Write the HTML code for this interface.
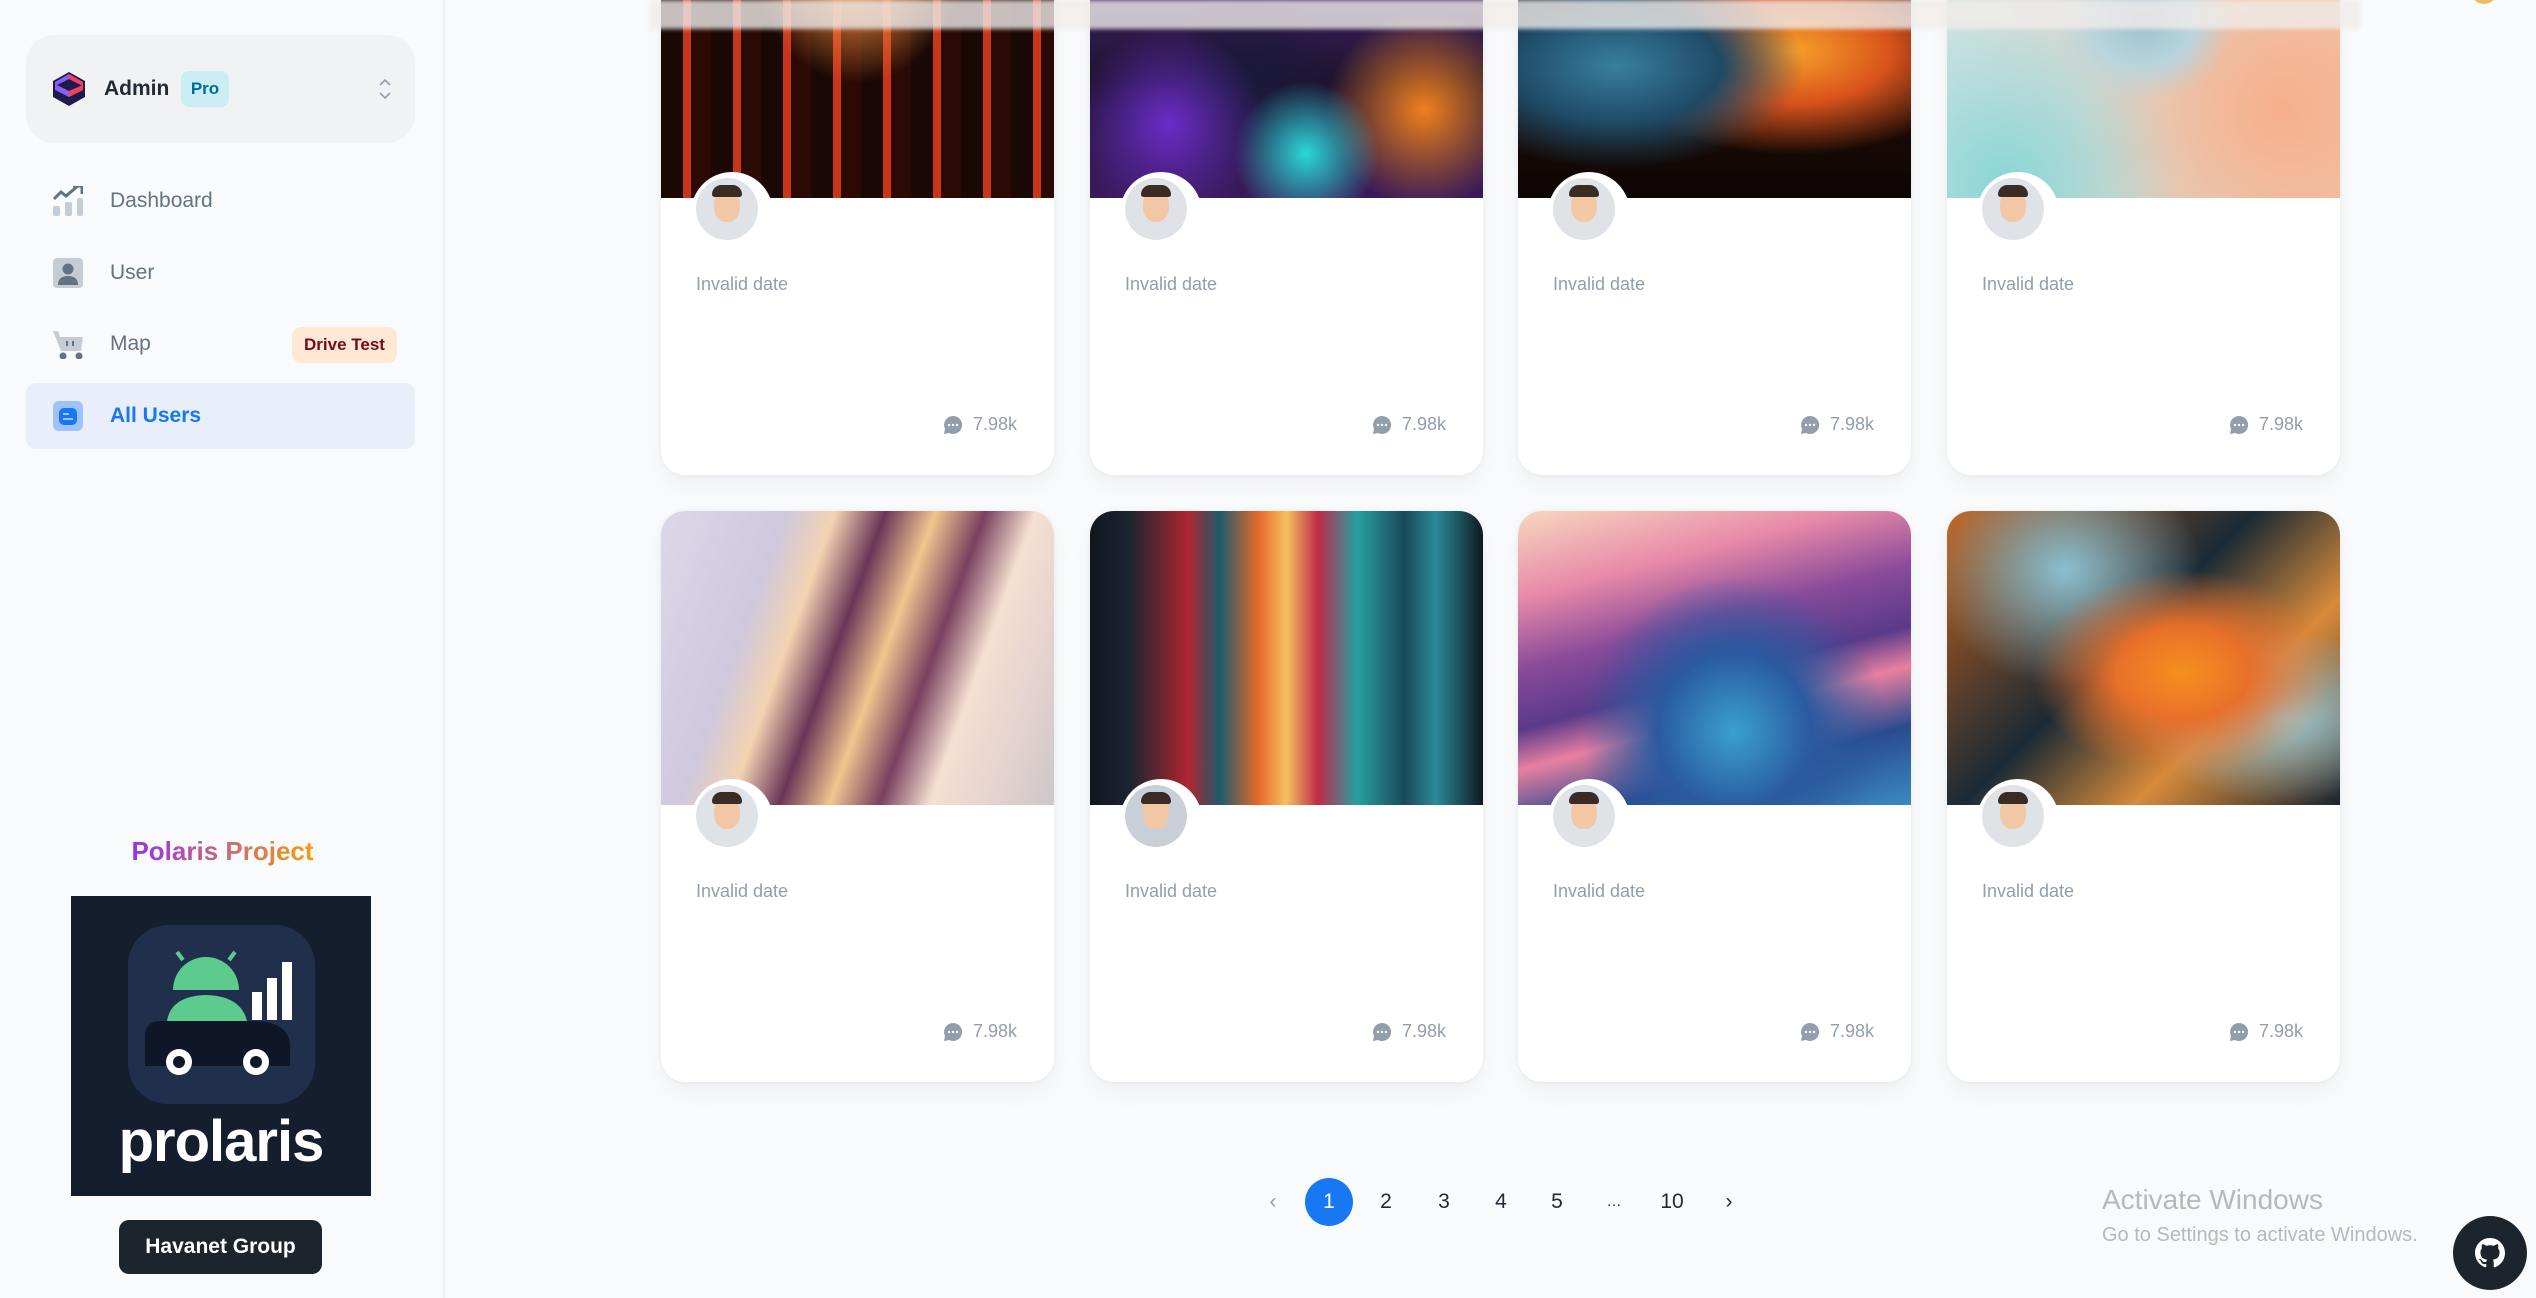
<!DOCTYPE html>
<html><head><meta charset="utf-8"><style>
*{box-sizing:border-box;margin:0;padding:0}
body{width:2536px;height:1298px;overflow:hidden;background:#f9fafb;font-family:"Liberation Sans",sans-serif;position:relative}
.side{position:absolute;left:0;top:0;width:445px;height:1298px;background:#f9fafb;border-right:2px solid #eef0f3}
.hdr{position:absolute;left:26px;top:35px;width:389px;height:108px;background:#f1f2f4;border-radius:28px}
.nav{position:absolute;left:26px;width:389px;height:66px;display:flex;align-items:center;font-size:21px;color:#637381}
.nav .ic{position:absolute;left:27px;top:18px;width:30px;height:30px}
.nav span.t{position:absolute;left:84px}
.card{position:absolute;width:393px;height:571px;background:#fff;border-radius:24px;overflow:hidden;box-shadow:0 0 4px rgba(145,158,171,.15),0 12px 24px -4px rgba(145,158,171,.12)}
.img{position:absolute;left:0;top:0;width:393px;height:294px}
.notch{position:absolute;left:30px;top:268px;width:82px;height:60px;background:#fff;border-radius:41px 41px 0 0}
.av{position:absolute;left:35px;top:274px;width:62px;height:62px;border-radius:50%;background:#dfe3e8;overflow:hidden}
.av:before{content:"";position:absolute;left:18px;top:12px;width:26px;height:32px;border-radius:45%;background:#f1c7a6}
.av:after{content:"";position:absolute;left:16px;top:7px;width:30px;height:12px;border-radius:14px 14px 4px 4px;background:#3a2b25}
.date{position:absolute;left:35px;top:370px;font-size:18px;color:#919eab}
.cnt{position:absolute;right:37px;top:510px;font-size:18px;color:#919eab;display:flex;align-items:center;gap:10px}
.pg{position:absolute;top:1178px;font-size:21px;color:#212b36;width:48px;height:48px;line-height:48px;text-align:center}
</style></head><body>
<div class="side">
  <div class="hdr">
    <svg style="position:absolute;left:27px;top:37px" width="32" height="34" viewBox="0 0 32 34"><polygon points="16,0 32,9 32,25 16,34 0,25 0,9" fill="#1e1b4b"/><path d="M16 2 L30 10 L30 14 L16 7 L4 13 L16 19 L30 13 L30 18 L16 25 L2 18 L2 10 Z" fill="#8b5cf6"/><path d="M16 2 L30 10 L30 14 L16 7 Z M16 19 L30 13 L30 18 L16 25 Z" fill="#f43f5e"/></svg>
    <div style="position:absolute;left:78px;top:42px;font-size:21px;font-weight:bold;color:#212b36">Admin</div>
    <div style="position:absolute;left:155px;top:36px;width:48px;height:36px;border-radius:8px;background:#cbeef4;color:#006c9c;font-size:17px;font-weight:bold;line-height:36px;text-align:center">Pro</div>
    <svg style="position:absolute;left:352px;top:43px" width="14" height="22" viewBox="0 0 14 22" fill="none" stroke="#919eab" stroke-width="1.6"><path d="M2 7 L7 2 L12 7 M2 15 L7 20 L12 15"/></svg>
  </div>
  <div class="nav" style="top:168px"><svg class="ic" viewBox="0 0 30 30"><rect x="0" y="20" width="7" height="10" rx="2" fill="#c4cdd5"/><rect x="12" y="16" width="7" height="14" rx="2" fill="#c4cdd5"/><rect x="24" y="12" width="6" height="18" rx="2" fill="#c4cdd5"/><path d="M1 13 L8 6 L13 10 L26 -1" stroke="#637381" stroke-width="3" fill="none"/><path d="M20 0 L29 0 L29 8" stroke="#637381" stroke-width="3" fill="none"/></svg><span class="t">Dashboard</span></div>
  <div class="nav" style="top:240px"><svg class="ic" viewBox="0 0 30 30"><rect width="30" height="30" rx="4" fill="#c4cdd5"/><circle cx="15" cy="11" r="5.5" fill="#637381"/><path d="M5 27 Q5 18 15 18 Q25 18 25 27 Z" fill="#637381"/></svg><span class="t">User</span></div>
  <div class="nav" style="top:311px"><svg class="ic" viewBox="0 0 30 30"><path d="M0 2 L5 2 L7 8 L30 8 L28 22 L8 22 Z" fill="#c4cdd5"/><circle cx="10" cy="27" r="3.5" fill="#637381"/><circle cx="26" cy="27" r="3.5" fill="#637381"/><rect x="13" y="12" width="2" height="5" fill="#637381"/><rect x="19" y="12" width="2" height="5" fill="#637381"/></svg><span class="t">Map</span>
    <div style="position:absolute;left:266px;top:16px;width:105px;height:36px;border-radius:9px;background:#ffe9d5;color:#7a0916;font-size:17px;font-weight:bold;line-height:36px;text-align:center">Drive Test</div></div>
  <div class="nav" style="top:383px;background:#e8eefa;border-radius:10px;color:#1877f2;font-weight:bold"><svg class="ic" viewBox="0 0 30 30"><rect width="30" height="30" rx="6" fill="#9ec2f9"/><rect x="6" y="7" width="18" height="17" rx="5" fill="#1877f2"/><rect x="10" y="12" width="6" height="2" fill="#9ec2f9"/><rect x="10" y="17" width="10" height="2" fill="#9ec2f9"/></svg><span class="t">All Users</span></div>

  <div style="position:absolute;left:0;width:445px;top:836px;text-align:center;font-size:26px;font-weight:bold"><span style="background:linear-gradient(90deg,#9333ea,#f59e0b);-webkit-background-clip:text;background-clip:text;color:transparent">Polaris Project</span></div>
  <div style="position:absolute;left:71px;top:896px;width:300px;height:300px;background:#151e2f">
    <div style="position:absolute;left:57px;top:29px;width:187px;height:179px;border-radius:40px;background:#1f2f4c"></div>
    <svg style="position:absolute;left:0;top:0" width="300" height="300" viewBox="0 0 300 300"><path d="M102 94 A33 33 0 0 1 168 94 Z" fill="#5dcb8d"/><path d="M112 64 L106 56 M158 64 L164 56" stroke="#5dcb8d" stroke-width="4"/><path d="M96 125 Q100 100 135 99 Q170 100 176 125 Z" fill="#5dcb8d"/><rect x="181" y="96" width="10" height="28" fill="#fff"/><rect x="196" y="82" width="10" height="42" fill="#fff"/><rect x="211" y="66" width="10" height="58" fill="#fff"/><path d="M74 140 Q74 125 90 125 L180 125 Q219 125 219 150 L219 170 L74 170 Z" fill="#0f1628"/><circle cx="108" cy="166" r="13" fill="#fff"/><circle cx="108" cy="166" r="6" fill="#0f1628"/><circle cx="185" cy="166" r="13" fill="#fff"/><circle cx="185" cy="166" r="6" fill="#0f1628"/></svg>
    <div style="position:absolute;left:0;width:300px;top:212px;text-align:center;color:#fff;font-size:58px;font-weight:bold;letter-spacing:-1px">prolaris</div>
  </div>
  <div style="position:absolute;left:119px;top:1220px;width:203px;height:54px;border-radius:10px;background:#1c252e;color:#fff;font-size:21px;font-weight:bold;line-height:54px;text-align:center">Havanet Group</div>
</div>

<!-- row 1 -->
<div class="card" style="left:661px;top:-96px"><div class="img" style="background:radial-gradient(ellipse at 50% 10%,#f5d97a 0,#e8843a 15%,transparent 40%),repeating-linear-gradient(90deg,#1a0805 0 22px,#c8361a 22px 30px,#2b0a05 30px 50px),linear-gradient(#ff7a2a,#400808)"></div><div class="notch"></div><div class="av"></div><div class="date">Invalid date</div><div class="cnt"><svg width="20" height="20" viewBox="0 0 20 20"><path d="M10 1a9 9 0 0 0-8 13L1 19l5-1A9 9 0 1 0 10 1z" fill="#919eab"/><circle cx="6" cy="10" r="1.2" fill="#fff"/><circle cx="10" cy="10" r="1.2" fill="#fff"/><circle cx="14" cy="10" r="1.2" fill="#fff"/></svg>7.98k</div></div>
<div class="card" style="left:1090px;top:-96px"><div class="img" style="background:radial-gradient(circle at 20% 75%,#6a2cc9 0,transparent 25%),radial-gradient(circle at 55% 85%,#28d8d8 0,transparent 22%),radial-gradient(circle at 85% 70%,#f0801e 0,transparent 25%),radial-gradient(circle at 40% 60%,#1a1a3a 0,transparent 30%),linear-gradient(#5a2c8a,#1e1330 60%,#3a1a5a)"></div><div class="notch"></div><div class="av"></div><div class="date">Invalid date</div><div class="cnt"><svg width="20" height="20" viewBox="0 0 20 20"><path d="M10 1a9 9 0 0 0-8 13L1 19l5-1A9 9 0 1 0 10 1z" fill="#919eab"/><circle cx="6" cy="10" r="1.2" fill="#fff"/><circle cx="10" cy="10" r="1.2" fill="#fff"/><circle cx="14" cy="10" r="1.2" fill="#fff"/></svg>7.98k</div></div>
<div class="card" style="left:1518px;top:-96px"><div class="img" style="background:radial-gradient(ellipse at 25% 55%,#3a7ea0 0,#1e4a66 25%,transparent 45%),radial-gradient(ellipse at 70% 50%,#f7a02a 0,#d9531a 25%,transparent 50%),linear-gradient(#2a2030,#1a0a05 75%,#0c0605)"></div><div class="notch"></div><div class="av"></div><div class="date">Invalid date</div><div class="cnt"><svg width="20" height="20" viewBox="0 0 20 20"><path d="M10 1a9 9 0 0 0-8 13L1 19l5-1A9 9 0 1 0 10 1z" fill="#919eab"/><circle cx="6" cy="10" r="1.2" fill="#fff"/><circle cx="10" cy="10" r="1.2" fill="#fff"/><circle cx="14" cy="10" r="1.2" fill="#fff"/></svg>7.98k</div></div>
<div class="card" style="left:1947px;top:-96px"><div class="img" style="background:radial-gradient(ellipse at 50% 40%,#9fc0cf 0,#b9d4dc 18%,transparent 32%),radial-gradient(circle at 15% 95%,#8ad6d8 0,transparent 40%),radial-gradient(circle at 85% 70%,#f6b08a 0,transparent 50%),linear-gradient(90deg,#cfe2e0,#efc6b0)"></div><div class="notch"></div><div class="av"></div><div class="date">Invalid date</div><div class="cnt"><svg width="20" height="20" viewBox="0 0 20 20"><path d="M10 1a9 9 0 0 0-8 13L1 19l5-1A9 9 0 1 0 10 1z" fill="#919eab"/><circle cx="6" cy="10" r="1.2" fill="#fff"/><circle cx="10" cy="10" r="1.2" fill="#fff"/><circle cx="14" cy="10" r="1.2" fill="#fff"/></svg>7.98k</div></div>

<!-- header blur strip -->
<div style="position:absolute;left:650px;top:0;width:1710px;height:29px;background:rgba(240,236,234,.8);filter:blur(2px)"></div>
<div style="position:absolute;left:2470px;top:-24px;width:28px;height:28px;border-radius:50%;background:#e8c060"></div>

<!-- row 2 -->
<div class="card" style="left:661px;top:511px"><div class="img" style="background:linear-gradient(110deg,#dcd8e8 0,#cfc8df 25%,#f3d2b0 35%,#6a3658 45%,#f2c58e 55%,#7a4060 65%,#f5e0d0 75%,#e9d4d0 85%,#ccc8c8 100%)"></div><div class="notch"></div><div class="av"></div><div class="date">Invalid date</div><div class="cnt"><svg width="20" height="20" viewBox="0 0 20 20"><path d="M10 1a9 9 0 0 0-8 13L1 19l5-1A9 9 0 1 0 10 1z" fill="#919eab"/><circle cx="6" cy="10" r="1.2" fill="#fff"/><circle cx="10" cy="10" r="1.2" fill="#fff"/><circle cx="14" cy="10" r="1.2" fill="#fff"/></svg>7.98k</div></div>
<div class="card" style="left:1090px;top:511px"><div class="img" style="background:linear-gradient(90deg,#10161e 0,#1a2530 10%,#b02530 25%,#1e5a6a 33%,#e86a2a 43%,#f5c060 50%,#c02a4a 58%,#26a0a0 68%,#1a4a5a 80%,#2a8a9a 88%,#101820 100%)"></div><div class="notch"></div><div class="av" style="background:#c9cfd6"></div><div class="date">Invalid date</div><div class="cnt"><svg width="20" height="20" viewBox="0 0 20 20"><path d="M10 1a9 9 0 0 0-8 13L1 19l5-1A9 9 0 1 0 10 1z" fill="#919eab"/><circle cx="6" cy="10" r="1.2" fill="#fff"/><circle cx="10" cy="10" r="1.2" fill="#fff"/><circle cx="14" cy="10" r="1.2" fill="#fff"/></svg>7.98k</div></div>
<div class="card" style="left:1518px;top:511px"><div class="img" style="background:radial-gradient(ellipse at 55% 75%,#3aa0d0 0,#2a5aa0 25%,transparent 50%),linear-gradient(165deg,#f7d8c0 0,#e88aa8 22%,#8a4a9a 40%,#5a3a8a 55%,#e880a0 65%,#2a4a90 80%,#3a8ac0 100%)"></div><div class="notch"></div><div class="av"></div><div class="date">Invalid date</div><div class="cnt"><svg width="20" height="20" viewBox="0 0 20 20"><path d="M10 1a9 9 0 0 0-8 13L1 19l5-1A9 9 0 1 0 10 1z" fill="#919eab"/><circle cx="6" cy="10" r="1.2" fill="#fff"/><circle cx="10" cy="10" r="1.2" fill="#fff"/><circle cx="14" cy="10" r="1.2" fill="#fff"/></svg>7.98k</div></div>
<div class="card" style="left:1947px;top:511px"><div class="img" style="background:radial-gradient(ellipse at 60% 55%,#f5901e 0,#e8702a 20%,transparent 45%),radial-gradient(ellipse at 30% 20%,#8ac0d0 0,transparent 35%),radial-gradient(ellipse at 85% 70%,#9acbd8 0,transparent 30%),linear-gradient(135deg,#c8601a,#1a2a35 45%,#d88a3a 70%,#1a2530)"></div><div class="notch"></div><div class="av"></div><div class="date">Invalid date</div><div class="cnt"><svg width="20" height="20" viewBox="0 0 20 20"><path d="M10 1a9 9 0 0 0-8 13L1 19l5-1A9 9 0 1 0 10 1z" fill="#919eab"/><circle cx="6" cy="10" r="1.2" fill="#fff"/><circle cx="10" cy="10" r="1.2" fill="#fff"/><circle cx="14" cy="10" r="1.2" fill="#fff"/></svg>7.98k</div></div>

<!-- pagination -->
<div class="pg" style="left:1249px;color:#919eab">&#8249;</div>
<div class="pg" style="left:1305px;background:#1877f2;color:#fff;border-radius:50%">1</div>
<div class="pg" style="left:1362px">2</div>
<div class="pg" style="left:1420px">3</div>
<div class="pg" style="left:1477px">4</div>
<div class="pg" style="left:1533px">5</div>
<div class="pg" style="left:1590px;font-size:15px">…</div>
<div class="pg" style="left:1648px">10</div>
<div class="pg" style="left:1705px">&#8250;</div>

<div style="position:absolute;left:2102px;top:1184px;font-size:28px;color:#b8b8b8">Activate Windows</div>
<div style="position:absolute;left:2102px;top:1224px;font-size:20px;color:#b8b8b8">Go to Settings to activate Windows.</div>
<div style="position:absolute;left:2453px;top:1216px;width:74px;height:74px;border-radius:50%;background:#1c252e"><svg style="position:absolute;left:22px;top:22px" width="30" height="30" viewBox="0 0 16 16"><path fill="#fff" d="M8 0C3.58 0 0 3.58 0 8c0 3.54 2.290 6.53 5.47 7.59.4.07.55-.17.55-.38v-1.33c-2.23.48-2.7-1.070-2.7-1.07-.36-.92-.89-1.17-.89-1.17-.73-.5.05-.49.05-.49.8.06 1.23.83 1.23.83.71 1.22 1.87.87 2.33.66.07-.52.28-.87.5-1.07-1.78-.2-3.64-.89-3.64-3.95 0-.87.31-1.59.82-2.15-.08-.2-.36-1.02.08-2.12 0 0 .67-.21 2.2.82a7.6 7.6 0 0 1 4 0c1.53-1.04 2.2-.82 2.2-.82.44 1.1.16 1.92.08 2.12.51.56.82 1.27.82 2.15 0 3.07-1.87 3.75-3.65 3.95.29.25.54.73.54 1.48v2.2c0 .21.15.46.55.38A8 8 0 0 0 16 8c0-4.42-3.58-8-8-8z"/></svg></div>
</body></html>
